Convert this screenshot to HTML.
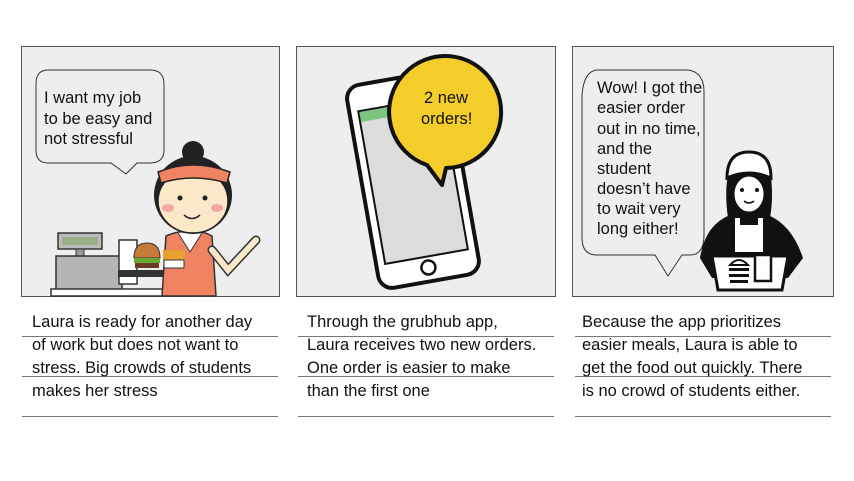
<!DOCTYPE html>
<html><head><style>
body{margin:0;background:#fff;width:854px;height:481px;overflow:hidden;font-family:"Liberation Sans",Arial,sans-serif}
.p{position:absolute;top:46px;height:251px;background:#eeeeee;border:1px solid #555;box-sizing:border-box}
.cap{position:absolute;font-size:16.5px;color:#111;line-height:23px;white-space:nowrap}
.ln{position:absolute;height:1px;background:#777}
</style></head><body>
<div class="p" style="left:21px;width:259px"></div>
<div class="p" style="left:296px;width:260px"></div>
<div class="p" style="left:572px;width:262px"></div>
<svg width="854" height="481" style="position:absolute;left:0;top:0">
<path d="M48 70 H150 Q164 70 164 84 V150 Q164 163 150 163 H137 L126 174 L111 163 H48 Q36 163 36 150 V84 Q36 70 48 70Z" fill="#eeeeee" stroke="#333" stroke-width="1"/>
<g font-size="16.5" fill="#111">
<text x="44" y="103">I want my job</text>
<text x="44" y="124">to be easy and</text>
<text x="44" y="144">not stressful</text>
</g>
<rect x="58" y="233" width="44" height="16" fill="#bbb" stroke="#333" stroke-width="1.5"/>
<rect x="62" y="237" width="36" height="8" fill="#9cb08a"/>
<rect x="76" y="249" width="8" height="7" fill="#999" stroke="#333"/>
<rect x="56" y="256" width="66" height="34" fill="#b5b5b5" stroke="#333" stroke-width="1.5"/>
<rect x="51" y="289" width="140" height="7" fill="#fff" stroke="#333" stroke-width="1.5"/>
<rect x="119" y="240" width="18" height="44" fill="#fff" stroke="#333" stroke-width="1.5"/>
<path d="M162 296 L166 236 Q192 225 212 236 L216 296Z" fill="#f08362" stroke="#333" stroke-width="1.5"/>
<path d="M178 233 L190 252 L202 233" fill="#fff" stroke="#333"/>
<path d="M212 250 L228 270 L256 240" fill="none" stroke="#333" stroke-width="9" stroke-linecap="round"/>
<path d="M212 250 L228 270 L256 240" fill="none" stroke="#fbe8c8" stroke-width="6" stroke-linecap="round"/>
<circle cx="193" cy="152" r="11" fill="#222"/>
<circle cx="193" cy="195" r="39" fill="#222"/>
<ellipse cx="193" cy="201" rx="35" ry="32" fill="#fbe8c8" stroke="#222" stroke-width="1.5"/>
<path d="M158 172 Q193 158 230 172 L227 183 Q193 173 161 183Z" fill="#f08362" stroke="#222" stroke-width="1.5"/>
<circle cx="180" cy="198" r="2.5" fill="#222"/><circle cx="205" cy="198" r="2.5" fill="#222"/>
<ellipse cx="168" cy="208" rx="6" ry="4" fill="#f7a8a0"/><ellipse cx="217" cy="208" rx="6" ry="4" fill="#f7a8a0"/>
<path d="M184 215 Q192 222 200 215" fill="none" stroke="#222" stroke-width="1.5"/>
<rect x="118" y="270" width="46" height="7" fill="#333"/>
<path d="M134 258 Q134 243 147 243 Q160 243 160 258Z" fill="#c87a3a" stroke="#333"/>
<rect x="134" y="258" width="26" height="5" fill="#6a3"/>
<rect x="135" y="263" width="24" height="5" fill="#6b3a20"/>
<rect x="163" y="250" width="22" height="12" fill="#e8a030"/>
<rect x="164" y="260" width="20" height="8" fill="#fff" stroke="#333"/>
<g transform="rotate(-10 412 180)">
<rect x="362" y="77" width="102" height="206" rx="14" fill="#fff" stroke="#111" stroke-width="4"/>
<rect x="371" y="103" width="84" height="155" fill="#dcdcdc" stroke="#111" stroke-width="2"/>
<rect x="372" y="104" width="82" height="10" fill="#7cc47f"/>
<circle cx="413" cy="269" r="7" fill="#fff" stroke="#111" stroke-width="2.5"/>
</g>
<path d="M427 165 A56 56 0 1 1 446 168 L442 185Z" fill="#f4cd2a" stroke="#111" stroke-width="4" stroke-linejoin="round"/>
<text x="424" y="103" font-size="16.5" fill="#111">2 new</text>
<text x="421" y="124" font-size="16.5" fill="#111">orders!</text>
<path d="M598 70 H688 Q705 72 704 95 V235 Q704 255 690 255 H682 L668 276 L655 255 H597 Q582 255 582 238 V95 Q584 70 598 70Z" fill="#eeeeee" stroke="#333" stroke-width="1"/>
<g font-size="16.5" fill="#111">
<text x="597" y="93">Wow! I got the</text>
<text x="597" y="113">easier order</text>
<text x="597" y="134">out in no time,</text>
<text x="597" y="154">and the</text>
<text x="597" y="174">student</text>
<text x="597" y="194">doesn’t have</text>
<text x="597" y="214">to wait very</text>
<text x="597" y="234">long either!</text>
</g>
<path d="M712 278 L700 258 Q705 225 730 215 H768 Q792 225 803 258 L788 278Z" fill="#111"/>
<path d="M735 212 H763 V252 H735Z" fill="#fff"/>
<path d="M740 212 H758 V225 H740Z" fill="#111"/>
<path d="M728 218 Q724 190 729 170 Q749 150 770 170 Q774 195 770 218Z" fill="#111"/>
<ellipse cx="749" cy="194" rx="16" ry="19" fill="#fff" stroke="#111" stroke-width="3"/>
<path d="M727 178 Q727 152 749 152 Q771 152 771 178 Q749 168 727 178Z" fill="#fff" stroke="#111" stroke-width="3"/>
<circle cx="742" cy="190" r="2" fill="#111"/><circle cx="757" cy="190" r="2" fill="#111"/>
<path d="M744 201 Q749 205 754 201" fill="none" stroke="#111" stroke-width="1.5"/>
<path d="M712 256 L788 256 L782 290 H718Z" fill="#fff" stroke="#111" stroke-width="3"/>
<path d="M730 265 Q739 255 748 265Z" fill="#fff" stroke="#111" stroke-width="2"/>
<rect x="729" y="268" width="20" height="3" fill="#111"/>
<rect x="729" y="274" width="20" height="3" fill="#111"/>
<rect x="730" y="280" width="18" height="3" fill="#111"/>
<rect x="755" y="255" width="16" height="26" fill="#fff" stroke="#111" stroke-width="2.5"/>
</svg>
<div class="ln" style="left:22px;top:336px;width:256px"></div>
<div class="ln" style="left:22px;top:376px;width:256px"></div>
<div class="ln" style="left:22px;top:416px;width:256px"></div>
<div class="ln" style="left:298px;top:336px;width:256px"></div>
<div class="ln" style="left:298px;top:376px;width:256px"></div>
<div class="ln" style="left:298px;top:416px;width:256px"></div>
<div class="ln" style="left:575px;top:336px;width:256px"></div>
<div class="ln" style="left:575px;top:376px;width:256px"></div>
<div class="ln" style="left:575px;top:416px;width:256px"></div>
<div class="cap" style="left:32px;top:311px">Laura is ready for another day<br>of work but does not want to<br>stress. Big crowds of students<br>makes her stress</div>
<div class="cap" style="left:307px;top:311px">Through the grubhub app,<br>Laura receives two new orders.<br>One order is easier to make<br>than the first one</div>
<div class="cap" style="left:582px;top:311px">Because the app prioritizes<br>easier meals, Laura is able to<br>get the food out quickly. There<br>is no crowd of students either.</div>
</body></html>
